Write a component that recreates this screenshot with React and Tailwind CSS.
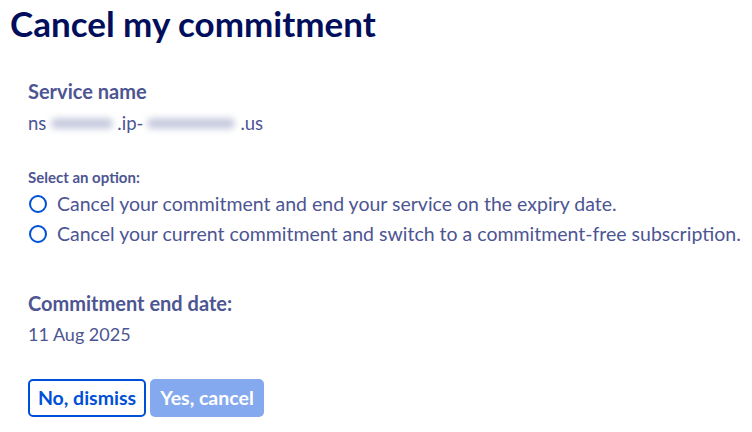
import React from 'react';

const Radio = ({ label }) => (
  <label className="flex items-center gap-[10px] h-[30px] pl-[1px]">
    <span className="w-[18px] h-[18px] rounded-full border-2 border-[#0050d7] shrink-0" />
    <span className="text-[19.5px] text-[#4d5592]">{label}</span>
  </label>
);

export default function App() {
  return (
    <div className="pl-[10px] pt-[1px] font-['Lato',sans-serif] bg-white min-h-[432px]">
      <h1 className="text-[35px] leading-[44px] font-bold text-[#000e5c]">Cancel my commitment</h1>

      <div className="pl-[18px] mt-[33px]">
        <div className="text-[20px] leading-[26px] font-bold text-[#4d5592]">Service name</div>
        <div className="text-[18.5px] leading-[26px] text-[#4d5592] mt-[6px] flex items-center">
          ns
          <span className="inline-block w-[62px] h-[11px] ml-[5px] mr-[4px] rounded-full bg-[#c9cce0] blur-[3px]" />
          .ip-
          <span className="inline-block w-[88px] h-[11px] ml-[4px] mr-[5px] rounded-full bg-[#c9cce0] blur-[3px]" />
          .us
        </div>

        <div className="mt-[32px] text-[15px] leading-[18px] font-bold text-[#4d5592]">Select an option:</div>
        <div className="mt-[3px]">
          <Radio label="Cancel your commitment and end your service on the expiry date." />
          <Radio label="Cancel your current commitment and switch to a commitment-free subscription." />
        </div>

        <div className="mt-[41px] text-[20px] leading-[26px] font-bold text-[#4d5592]">Commitment end date:</div>
        <div className="text-[18px] leading-[26px] text-[#4d5592] mt-[5px]">11 Aug 2025</div>

        <div className="mt-[32px] flex gap-[4px]">
          <button className="h-[38px] w-[118px] rounded-[5px] border-2 border-[#0050d7] text-[#0050d7] text-[19.5px] font-bold">
            No, dismiss
          </button>
          <button className="h-[38px] w-[114px] rounded-[5px] bg-[#85a9ee] text-white text-[19.5px] font-bold">
            Yes, cancel
          </button>
        </div>
      </div>
    </div>
  );
}
